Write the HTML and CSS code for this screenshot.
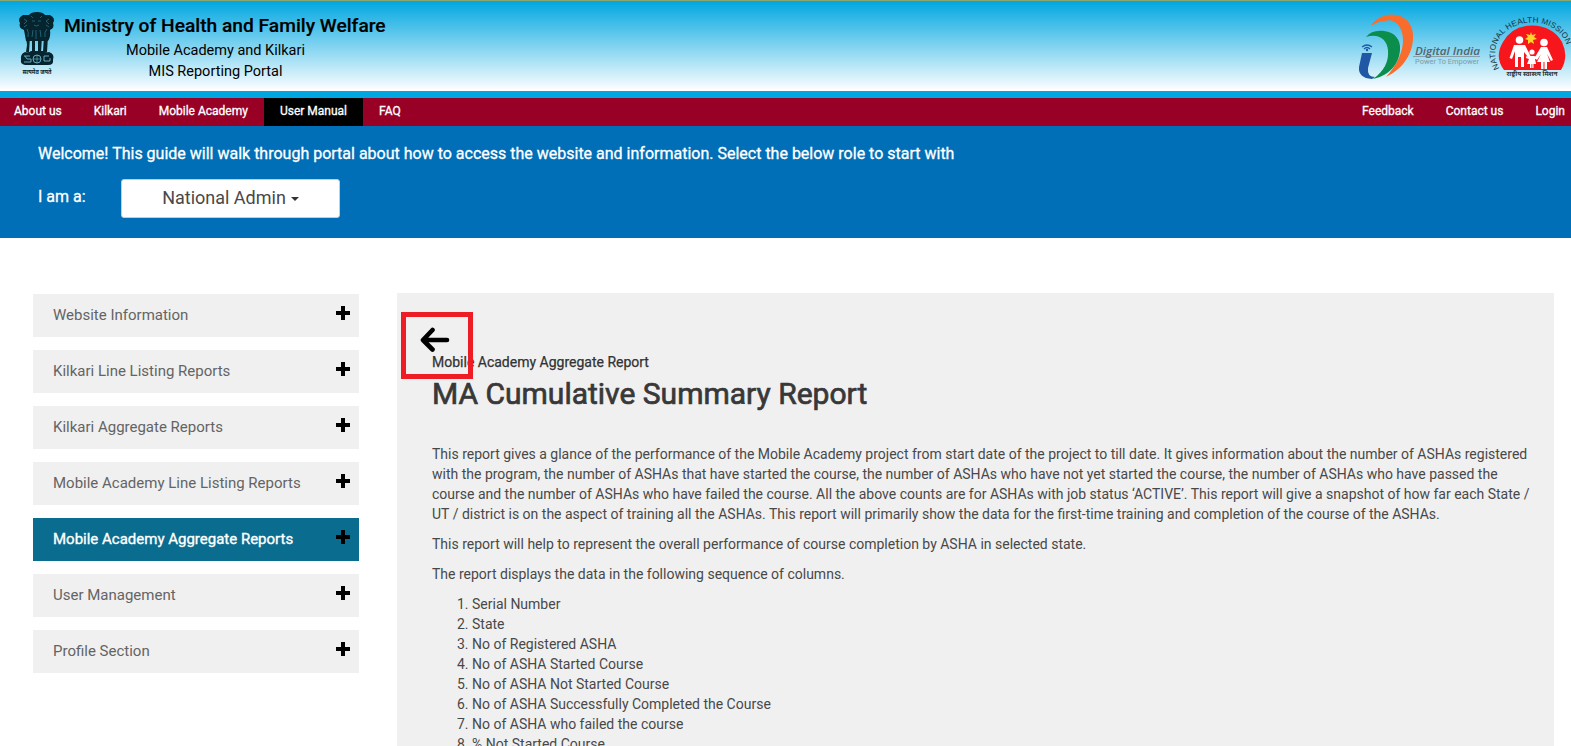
FILE: index.html
```html
<!DOCTYPE html>
<html lang="en">
<head>
<meta charset="utf-8">
<title>MIS Reporting Portal</title>
<link rel="stylesheet" href="styles.css">
</head>
<body>
<header class="masthead">
  <svg class="emblem" width="42" height="68" viewBox="0 0 42 68">
    <g fill="#06242d">
      <path d="M14 5Q16 2 22 2Q28 2 30 5L35 5Q41 8 38 13Q40 18 35 20Q36 27 33 31H11L9 20Q3 18 5 13Q2 8 8 5Z"/>
      <path d="M11 26H15L14 42H11L12 35ZM17 26H20V43H17ZM23 26H27L26 43H23ZM29 26H33L32 42H28Z"/>
      <path d="M10 42Q14 43 16 41H28Q31 43 34 42Q40 44 38 50Q39 55 33 55H10Q5 54 6 50Q5 44 10 42Z"/>
    </g>
    <g fill="none" stroke="#3ba6c7" stroke-width=".8" opacity=".6">
      <path d="M16 6L18 8M27 6L25 8M17 11H20M23 11H26M19 15Q21 17 24 15M9 9L12 11L9 14M34 9L31 11L34 14M12 19Q14 22 13 27M32 19Q29 22 30 27M18 20L17 27M25 20L26 27M9 17L12 15M31 15L34 17M21 20V29"/>
    </g>
    <g fill="none" stroke="#6fb8cf" stroke-width=".9">
      <path d="M9 46H15M10 46L12 49H16V52H9M29 46H34M29 46V51H35V48"/>
      <circle cx="22" cy="49" r="4"/><path d="M22 45V53M18 49H26" stroke-width=".6"/>
    </g>
    <text x="22" y="63.500" text-anchor="middle" class="motto" textLength="29" lengthAdjust="spacingAndGlyphs">सत्यमेव जयते</text>
  </svg>
  <div class="titles">
    <h1 class="ministry">Ministry of Health and Family Welfare</h1>
    <p class="program">Mobile Academy and Kilkari</p>
    <p class="portal">MIS Reporting Portal</p>
  </div>
  <svg class="digital" width="124" height="68" viewBox="0 0 124 68">
    <path fill="#fa6c2c" d="M13 13C18 4 30 0 38 2C50 4 56 14 55 26C54 43 43 57 28 64C39 52 45 39 45 27C45 13 36 5 27 8Q20 8 13 13Z"/>
    <path fill="#0b8d4b" d="M8 24C12 19 18 17 26 18C37 19 43 27 42 37C41 52 30 63 15 66C26 58 31 49 30 37C29 26 20 20 8 24Z"/>
    <path fill="#2158a6" d="M4 40H14L10 55Q9 64 17 64L14 66Q0 65 1 54Z"/>
    <g fill="none" stroke="#2158a6" stroke-width="1.3"><path d="M4 34Q9 30 14 34M6 36Q9 33 12 36"/></g>
    <circle cx="9" cy="37" r="1.200" fill="#2158a6"/>
    <text x="57" y="42" class="di-name" textLength="65" lengthAdjust="spacingAndGlyphs">Digital India</text>
    <path d="M55 43.500H122" stroke="#777" stroke-width=".6"/>
    <text x="57" y="50.500" class="di-tag" textLength="64" lengthAdjust="spacingAndGlyphs">Power To Empower</text>
  </svg>
  <svg class="nhm" width="81" height="66" viewBox="0 0 81 66">
    <path fill="#f8161d" d="M14 55Q4 42 13 27Q22 10.500 42 10.500Q63 11 72 27Q79 42 71 55Z"/>
    <path d="M41 17L42 20L46 19L44 22L47 24L43 25L44 29L41 27L38 29L38 25L35 24L38 22L36 19L40 20Z" fill="#ffd52c"/>
    <g fill="#fff">
      <circle cx="29.500" cy="25" r="3.800"/><circle cx="54" cy="27.500" r="3.800"/><circle cx="42" cy="37" r="2.600"/>
      <path d="M24 30H35L41 42L39 43.500L34 37V52H31V42H28V52H25V36L22 44L19.500 43Z"/>
      <path d="M51 32H57L63 45L61 46L57 39L60 47H57V54H54.500V47H53.500V54H51V47H47L51 39L47 45L44.500 43Z"/>
      <path d="M40 41H44L48 42V43.500L45 44L46 49H43.500V53H42.300V49H41.500V53H40V49H37L39 44L36 43V41.500Z"/>
    </g>
    <path id="nhm-arc" fill="none" d="M9.500 53.500C-4 30 16 7.500 42 7.500C68 7.500 87 30 73 53.500"/>
    <text class="nhm-ring"><textPath href="#nhm-arc" textLength="113">NATIONAL HEALTH MISSION</textPath></text>
    <text x="42" y="60.500" text-anchor="middle" class="nhm-hindi" textLength="51" lengthAdjust="spacingAndGlyphs">राष्ट्रीय स्वास्थ्य मिशन</text>
  </svg>
</header>
<nav class="nav">
  <a class="nav-item w-about">About us</a>
  <a class="nav-item">Kilkari</a>
  <a class="nav-item">Mobile Academy</a>
  <a class="nav-item is-active">User Manual</a>
  <a class="nav-item">FAQ</a>
  <span class="nav-gap"></span>
  <a class="nav-item">Feedback</a>
  <a class="nav-item">Contact us</a>
  <a class="nav-item last">Login</a>
</nav>
<section class="welcome">
  <p class="welcome-text">Welcome! This guide will walk through portal about how to access the website and information. Select the below role to start with</p>
  <div class="role">
    <span class="role-label">I am a:</span>
    <button class="role-select">National Admin<span class="caret"></span></button>
  </div>
</section>
<main class="main">
  <aside class="side">
    <div class="side-item"><span>Website Information</span><svg class="plus" viewBox="0 0 14 14"><path d="M5 0H9V5H14V9H9V14H5V9H0V5H5Z"/></svg></div>
    <div class="side-item"><span>Kilkari Line Listing Reports</span><svg class="plus" viewBox="0 0 14 14"><path d="M5 0H9V5H14V9H9V14H5V9H0V5H5Z"/></svg></div>
    <div class="side-item"><span>Kilkari Aggregate Reports</span><svg class="plus" viewBox="0 0 14 14"><path d="M5 0H9V5H14V9H9V14H5V9H0V5H5Z"/></svg></div>
    <div class="side-item"><span>Mobile Academy Line Listing Reports</span><svg class="plus" viewBox="0 0 14 14"><path d="M5 0H9V5H14V9H9V14H5V9H0V5H5Z"/></svg></div>
    <div class="side-item current"><span>Mobile Academy Aggregate Reports</span><svg class="plus" viewBox="0 0 14 14"><path d="M5 0H9V5H14V9H9V14H5V9H0V5H5Z"/></svg></div>
    <div class="side-item"><span>User Management</span><svg class="plus" viewBox="0 0 14 14"><path d="M5 0H9V5H14V9H9V14H5V9H0V5H5Z"/></svg></div>
    <div class="side-item"><span>Profile Section</span><svg class="plus" viewBox="0 0 14 14"><path d="M5 0H9V5H14V9H9V14H5V9H0V5H5Z"/></svg></div>
  </aside>
  <article class="panel">
    <svg class="back" viewBox="0 0 30 26"><path d="M12.500 3L3 13L12.500 22.500M4 13H27" fill="none" stroke="#000" stroke-width="4.600" stroke-linecap="round" stroke-linejoin="round"/></svg>
    <p class="crumb">Mobile Academy Aggregate Report</p>
    <h2 class="report-title">MA Cumulative Summary Report</h2>
    <p class="copy">This report gives a glance of the performance of the Mobile Academy project from start date of the project to till date. It gives information about the number of ASHAs registered<br>with the program, the number of ASHAs that have started the course, the number of ASHAs who have not yet started the course, the number of ASHAs who have passed the<br>course and the number of ASHAs who have failed the course. All the above counts are for ASHAs with job status ‘ACTIVE’. This report will give a snapshot of how far each State /<br>UT / district is on the aspect of training all the ASHAs. This report will primarily show the data for the first-time training and completion of the course of the ASHAs.</p>
    <p class="copy">This report will help to represent the overall performance of course completion by ASHA in selected state.</p>
    <p class="copy">The report displays the data in the following sequence of columns.</p>
    <ol class="columns">
      <li>Serial Number</li>
      <li>State</li>
      <li>No of Registered ASHA</li>
      <li>No of ASHA Started Course</li>
      <li>No of ASHA Not Started Course</li>
      <li>No of ASHA Successfully Completed the Course</li>
      <li>No of ASHA who failed the course</li>
      <li>% Not Started Course</li>
    </ol>
    <div class="highlight"></div>
  </article>
</main>
</body>
</html>
```
FILE: styles.css
```css
* { box-sizing: border-box; }
html, body { height: 746px; overflow: hidden; }
body { margin: 0; background: #fff; color: #484848; font: 14px/20px Roboto, "Liberation Sans", sans-serif; }
p, h1, h2, ol { margin: 0; }

.masthead { display: flex; align-items: flex-start; height: 91px; border-top: 1px solid #8aa86e; background: linear-gradient(#00a7e1, #fff); color: #000; overflow: hidden; }
.emblem { margin: 9px 0 0 15px; flex: none; }
.motto { font: bold 6px "Noto Sans", sans-serif; fill: #06242d; }
.titles { margin-left: 7px; width: 323px; white-space: nowrap; }
.ministry { margin-top: 13px; font-size: 19.2px; line-height: 24px; font-weight: 500; -webkit-text-stroke: .2px; }
.program { margin-top: 3px; width: 303px; text-align: center; font-size: 14.5px; line-height: 20px; }
.portal { margin-top: 1px; width: 303px; text-align: center; font-size: 14.5px; line-height: 20px; }
.digital { margin: 12px 0 0 auto; flex: none; }
.di-name { font: italic 600 11px "Open Sans", sans-serif; fill: #53646c; }
.di-tag { font: 7px Roboto, sans-serif; fill: #8499a4; }
.nhm { margin: 14px 0 0 8px; flex: none; overflow: visible; }
.nhm-ring { font: 8px "Liberation Sans", sans-serif; fill: #12303b; }
.nhm-hindi { font: bold 6px "Noto Sans", sans-serif; fill: #333; }

.nav { display: flex; height: 35px; border-top: 7px solid #00a7e1; background: #990026; color: #fff; font-size: 12px; line-height: 26px; -webkit-text-stroke: .3px; }
.nav-item { padding: 0 16px; white-space: nowrap; }
.nav-item.w-about { padding-left: 14px; }
.nav-item.is-active { background: #000; }
.nav-item.last { padding-right: 6px; }
.nav-gap { flex: 1; }

.welcome { height: 112px; padding: 17px 38px 0; background: #006fb7; color: #fff; font-size: 16px; -webkit-text-stroke: .3px; }
.welcome-text { line-height: 22px; white-space: nowrap; }
.role { display: flex; margin-top: 14px; }
.role-label { width: 83px; line-height: 36px; }
.role-select { display: flex; align-items: center; justify-content: center; width: 219px; height: 39px; padding: 0 0 2px; border: 1px solid #ccc; border-radius: 3px; background: #fff; color: #484848; font: 18px Roboto, sans-serif; -webkit-text-stroke: 0; }
.caret { margin: 3px 0 0 5px; border: 4px solid transparent; border-top-color: #333; border-bottom: 0; }

.main { display: flex; align-items: flex-start; padding: 55px 17px 0 33px; }
.side { display: flex; flex-direction: column; gap: 13px; width: 326px; margin-top: 1px; }
.side-item { display: flex; justify-content: space-between; height: 43px; padding: 0 9px 0 20px; background: #f0f0f0; color: #646464; font-size: 15px; line-height: 42px; white-space: nowrap; }
.side-item.current { background: #0a6c8e; color: #fff; -webkit-text-stroke: .35px; }
.plus { width: 14px; height: 14px; margin-top: 12px; stroke: none; }
.panel { position: relative; width: 1157px; height: 453px; margin-left: 38px; padding: 59px 0 0 35px; background: #f0f0f0; overflow: hidden; white-space: nowrap; }
.highlight { position: absolute; left: 4px; top: 19px; width: 72px; height: 67px; border: 5px solid #ee1c25; }
.back { position: absolute; left: 23px; top: 34px; width: 30px; height: 26px; }
.crumb { line-height: 20px; color: #333; -webkit-text-stroke: .25px; }
.report-title { margin: 3px 0 31px; line-height: 38px; font-size: 30px; font-weight: 400; color: #383838; -webkit-text-stroke: .7px; }
.copy { margin-bottom: 10px; }
.columns { padding-left: 40px; }
```
